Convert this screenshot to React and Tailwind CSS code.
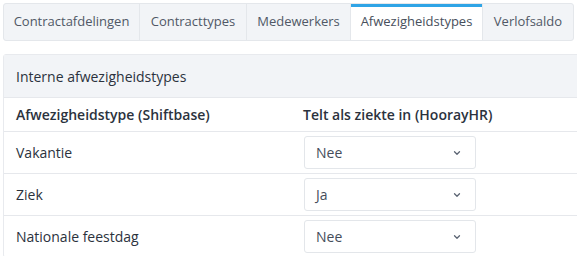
import { ChevronDown } from 'lucide-react';

const tabs = [
  { id: 'afd', label: 'Contractafdelingen', w: 'w-[136px]' },
  { id: 'types', label: 'Contracttypes', w: 'w-[107px]' },
  { id: 'mw', label: 'Medewerkers', w: 'w-[104px]' },
  { id: 'afw', label: 'Afwezigheidstypes', w: 'w-[132px]' },
  { id: 'vs', label: 'Verlofsaldo', w: 'flex-1' },
];

const rows = [
  { name: 'Vakantie', value: 'Nee' },
  { name: 'Ziek', value: 'Ja' },
  { name: 'Nationale feestdag', value: 'Nee' },
];

function Select({ value }) {
  return (
    <div className="flex items-center justify-between w-[172px] h-[33px] border border-[#e3e6ea] rounded-[3px] bg-white pl-[11px] pr-[13px] text-[14px] text-[#454d5a]">
      <span>{value}</span>
      <ChevronDown className="w-[10px] h-[10px] text-[#5b6472]" strokeWidth={3} />
    </div>
  );
}

export default function App() {
  const active = 'afw';

  return (
    <div className="w-[577px] h-[256px] overflow-hidden bg-white p-[3px] font-['Open_Sans',sans-serif]">
      {/* Tabs */}
      <div className="flex h-[38px] w-[571px] border border-[#e4e7eb] rounded-[3px] bg-[#f2f4f7] overflow-hidden">
        {tabs.map(tab => (
          <div
            key={tab.id}
            className={`relative flex items-center justify-center ${tab.w} text-[13px] border-r border-[#e4e7eb] last:border-r-0 ${active === tab.id ? 'bg-white text-[#474f5c]' : 'text-[#505866]'}`}
          >
            {active === tab.id && <div className="absolute top-0 left-0 right-0 h-[3px] bg-[#2fa4e6]" />}
            {tab.label}
          </div>
        ))}
      </div>

      {/* Panel */}
      <div className="mt-[13px] w-[580px] border border-[#e8eaee] rounded-[3px] text-[14px] text-[#2b323d]">
        <div className="flex items-center h-[43px] px-[12px] bg-[#f2f4f7] border-b border-[#e6e8ec]">
          Interne afwezigheidstypes
        </div>
        <div className="grid grid-cols-2 h-[33px] items-center font-semibold px-[12px]">
          <div>Afwezigheidstype (Shiftbase)</div>
          <div className="pl-[10px]">Telt als ziekte in (HoorayHR)</div>
        </div>
        {rows.map(row => (
          <div key={row.name} className="grid grid-cols-2 h-[42px] items-center border-t border-[#e6e8ec] px-[12px]">
            <div>{row.name}</div>
            <div className="pl-[11px]">
              <Select value={row.value} />
            </div>
          </div>
        ))}
      </div>
    </div>
  );
}
